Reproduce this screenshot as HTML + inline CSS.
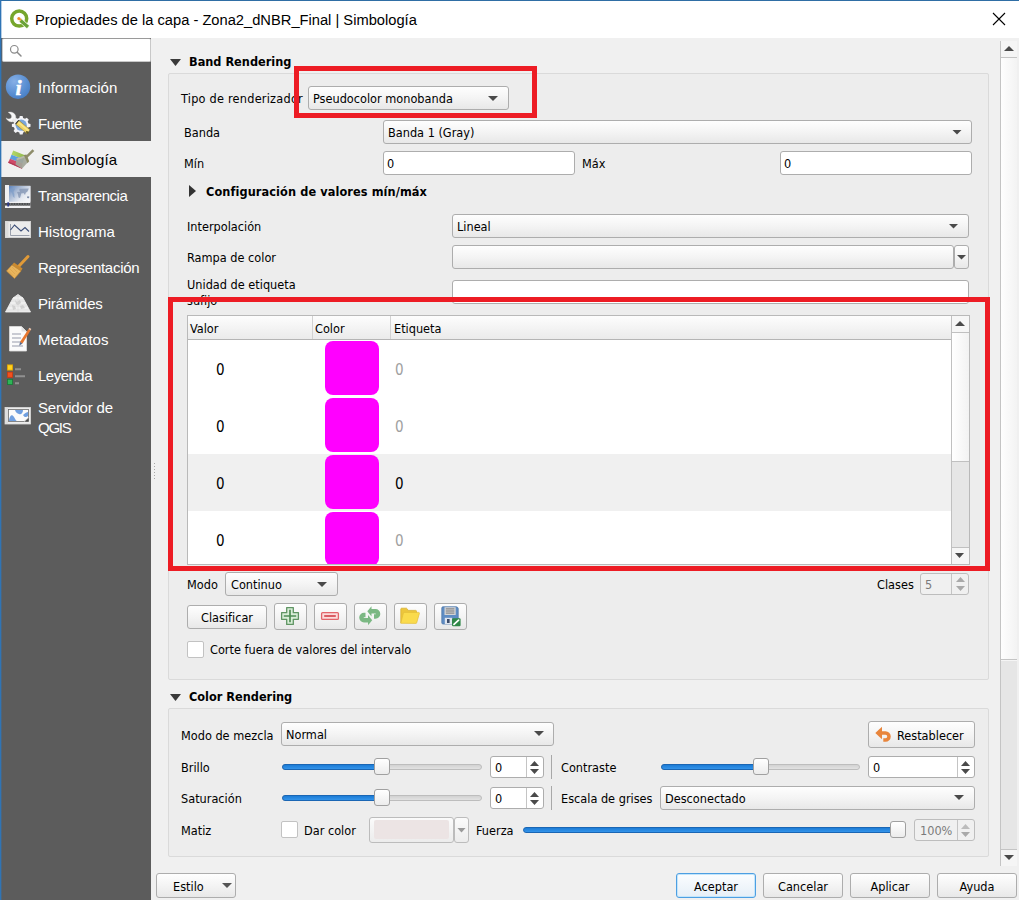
<!DOCTYPE html>
<html lang="es"><head><meta charset="utf-8"><title>Propiedades de la capa</title>
<style>
*{box-sizing:border-box;margin:0;padding:0}
html,body{width:1019px;height:900px;overflow:hidden;background:#f0f0f0}
body{position:relative;font-family:"DejaVu Sans Condensed","Liberation Sans",sans-serif;font-size:12.6px;color:#000}
.a{position:absolute}
.t{position:absolute;white-space:nowrap;line-height:16px;height:16px;font-size:12.6px}
.b{font-weight:bold}
.t{margin-top:1px}
.v{font-size:15px;line-height:18px;height:18px}
.g{color:#a0a0a0}
#title{left:0;top:0;width:1019px;height:38px;background:#fff;border-top:1px solid #2f6ea5}
#ttext{left:35px;top:10px;font-family:"Liberation Sans",sans-serif;font-size:14.7px;line-height:20px;white-space:nowrap}
#lb{left:0;top:0;width:2px;height:900px;background:linear-gradient(90deg,#2f74b5 0 1px,rgba(47,116,181,.35) 1px 2px)}
#side{left:1px;top:38px;width:150px;height:862px;background:#5c5c5c}
.si{position:absolute;left:38px;color:#fff;font-family:"Liberation Sans",sans-serif;font-size:15px;line-height:20px;white-space:nowrap}
.combo{position:absolute;border:1px solid #adadad;border-radius:3px;background:linear-gradient(#fefefe,#f4f4f4 50%,#e8e8e8)}
.inp{position:absolute;border:1px solid #adadad;border-radius:3px;background:#fff}
.btn{position:absolute;border:1px solid #adadad;border-radius:3px;background:linear-gradient(#fefefe,#f4f4f4 50%,#e8e8e8);text-align:center;line-height:24px;font-size:12.6px}
.grp{position:absolute;border:1px solid #dadada;background:#ededed;border-radius:2px}
.arr{position:absolute;width:10px;height:5px;background:#4a4a4a;clip-path:polygon(0 0,100% 0,50% 100%)}
.arrs{position:absolute;width:9px;height:5px;background:#4a4a4a;clip-path:polygon(0 0,100% 0,50% 100%)}
.arru{position:absolute;width:9px;height:5px;background:#4a4a4a;clip-path:polygon(50% 0,100% 100%,0 100%)}
.garr{position:absolute;width:11px;height:7px;background:#3a3a3a;clip-path:polygon(0 0,100% 0,50% 100%)}
.red{position:absolute;border:4px solid #ed1c24}
.sw{position:absolute;left:325px;width:54px;height:54px;background:#ff00ff;border-radius:8px}
.chk{position:absolute;width:17px;height:17px;background:#fff;border:1px solid #c2c2c2;border-radius:2px}
.trk{position:absolute;height:6px;border:1px solid #bdbdbd;border-radius:3px;background:linear-gradient(#d2d2d2,#e2e2e2)}
.trkf{position:absolute;height:6px;border:1px solid #1a66b4;border-radius:3px;background:linear-gradient(#1c7cd6,#3494ea)}
.hnd{position:absolute;width:16px;height:17px;border:1px solid #a0a0a0;border-radius:3px;background:linear-gradient(#ffffff,#ececec)}
</style></head><body>
<div class="a" id="title"></div>
<div class="a" id="ttext">Propiedades de la capa - Zona2_dNBR_Final | Simbología</div>
<svg class="a" style="left:9px;top:9px" width="22" height="20" viewBox="0 0 22 20"><circle cx="10.200" cy="9.600" r="7.500" fill="none" stroke="#76a62c" stroke-width="3.500"/><path d="M9.500 9.500L19.500 18.500" stroke="#f4f9e8" stroke-width="4.500"/><path d="M11.500 11.500L19 18" stroke="#6aa238" stroke-width="3.200" stroke-linecap="butt"/><path d="M9 8.800l3.800 1.300-1.700 2.100z" fill="#f0a030"/><circle cx="9.800" cy="9.600" r="1.500" fill="#ee8a2a"/></svg>
<svg class="a" style="left:992px;top:12px" width="14" height="14" viewBox="0 0 14 14"><path d="M1 1l12 12M13 1L1 13" stroke="#000" stroke-width="1.100"/></svg>
<!--SIDEBAR-->
<div class="a" id="side"></div>
<div class="a" style="left:2px;top:38px;width:149px;height:24px;background:#fff;border:1px solid #c8c8c8;border-top-color:#9a9a9a;border-radius:2px"></div>
<svg class="a" style="left:8px;top:43px" width="16" height="16" viewBox="0 0 16 16"><circle cx="6.3" cy="6.3" r="3.8" fill="none" stroke="#8a8a8a" stroke-width="1.2"/><path d="M9.2 9.2L13 13" stroke="#8a8a8a" stroke-width="1.5" stroke-linecap="round"/></svg>
<div class="a" style="left:1px;top:141px;width:150px;height:36px;background:#f0f0f0"></div>
<!-- info icon -->
<svg class="a" style="left:5px;top:74px" width="26" height="26" viewBox="0 0 26 26"><defs><radialGradient id="gi" cx="0.35" cy="0.28" r="0.85"><stop offset="0" stop-color="#86b0e6"/><stop offset="0.6" stop-color="#5a8fd2"/><stop offset="1" stop-color="#4379c0"/></radialGradient></defs><circle cx="13" cy="12.700" r="12.200" fill="url(#gi)"/><text x="13.600" y="20.500" font-family="Liberation Serif,serif" font-style="italic" font-weight="bold" font-size="22" fill="#fff" stroke="#fff" stroke-width=".5" text-anchor="middle">i</text></svg>
<!-- fuente icon -->
<svg class="a" style="left:5px;top:111px" width="26" height="26" viewBox="0 0 26 26"><g transform="translate(16.200,14.200)"><path d="M-1.400-9.200h2.800l.5 2 1.900.8 1.800-1.100 2 2-1.100 1.800.8 1.900 2 .5v2.800l-2 .5-.8 1.900 1.100 1.800-2 2-1.800-1.100-1.900.8-.5 2h-2.800l-.5-2-1.900-.8-1.800 1.100-2-2 1.100-1.800-.8-1.900-2-.5v-2.800l2-.5.8-1.900-1.100-1.800 2-2 1.800 1.100 1.900-.8z" fill="#f3f3f7"/><circle r="5.600" fill="#7aa6dc"/></g><path d="M3.200 1.300c3.300-.9 6.300.6 7.300 3.300.6 1.700.3 3.100-.3 4.200l-2.600 2c-1.500.3-3.500 0-5.200-1.700-.7-.7-1.100-1.500-1.300-2.200 1.700 1.300 3.700 1.300 4.800.3 1.200-1.200 1.200-3.500-2.700-5.900z" fill="#f7f7f7" stroke="#d8d8d8" stroke-width=".4"/><path d="M8.500 7.300l3.900 3.400-2 2.300-3.700-3.500z" fill="#ececec"/><path d="M10.700 13.200l3.200-3.800" stroke="#1e1e1e" stroke-width="1.400"/><path d="M14.100 9.600L25 18.700 21.800 22.500 10.900 13.400z" fill="#f0d465" stroke="#7d6f2c" stroke-width=".5"/><path d="M13.300 11.300L23.600 19.900" stroke="#f9e68a" stroke-width="1.600"/><ellipse cx="22.300" cy="21.300" rx="1.500" ry="1.100" transform="rotate(40 22.300 21.300)" fill="#5a5326"/></svg>
<!-- simbologia icon -->
<svg class="a" style="left:7px;top:147px" width="28" height="26" viewBox="0 0 28 26"><defs><linearGradient id="gs1" x1="0" x2="1"><stop offset="0" stop-color="#b5d96a"/><stop offset="1" stop-color="#8fb64c"/></linearGradient></defs><path d="M6.200 3.600L18.600 8.600 17 12.600 4.500 7.700z" fill="url(#gs1)"/><path d="M4.500 7.700L17 12.600 15.500 16.600 2.900 11.700z" fill="#5d9fe0"/><path d="M2.900 11.700L15.500 16.600 15 21.800 1.200 15.800z" fill="#cf4a68"/><path d="M1.200 15.800L15 21.800 14.600 20.300 1.700 14.600z" fill="#b23a55"/><path d="M9.500 11.500L17.500 8.800 21 15 15 21.800 8.500 17.500z" fill="#a3a79a" opacity=".93"/><path d="M9.500 11.500L17.500 8.800 18.300 10.200 10.200 13z" fill="#b9bcae"/><path d="M16.800 8L19.500 7.500 22.200 14.200 20.500 16.200z" fill="#8b8a64"/><path d="M18.500 9.200L25.500 2.200 27.300 4 20.200 11z" fill="#8e8c6a"/></svg>
<!-- transparencia icon -->
<svg class="a" style="left:4px;top:184px" width="28" height="26" viewBox="0 0 28 26"><defs><linearGradient id="gt" x1="0" x2="1" y1="0" y2=".75"><stop offset="0" stop-color="#5c84be"/><stop offset=".35" stop-color="#a4b6d2"/><stop offset=".75" stop-color="#e6eaf1"/><stop offset="1" stop-color="#f4f5f8"/></linearGradient></defs><rect x="1" y="1.800" width="25.400" height="22.200" fill="#f1f1f3"/><rect x="5" y="2" width="21.400" height="15.800" fill="url(#gt)"/><rect x="1" y="1" width="4" height="16.500" fill="#f0f0f2"/><path d="M6.500 4.500l4.500.3-1.500 3.200.8 2 .2 4-1.500-1.500-1-3.500-1.800-2z" fill="#7d9cc8" opacity=".7"/><path d="M13 8l3.500-.5.800 2-1.300 4.500-1.500-.5-.5-3zM15.500 4.800l9.300-.2-1.300 3-1.700 1.200-.8 2.200-1.500-2-1.800.5-1.500-1.500-1-1.700z" fill="#8496b4" opacity=".8"/><path d="M23.300 12.200l2 .3-.3 1.700-2-.3z" fill="#7e8eaa"/><rect x="1" y="19" width="25.400" height="2.600" fill="#4e4e50"/><path d="M6 20.300h20" stroke="#6f7375" stroke-width="2.600" stroke-dasharray="1.200 1.400"/><rect x="3.300" y="18.300" width="1.800" height="4.200" fill="#2d3a8c"/></svg>
<!--SIDE2-->
<!-- histograma icon -->
<svg class="a" style="left:4px;top:220px" width="28" height="20" viewBox="0 0 28 20"><rect x="1.500" y="1.500" width="25" height="16" fill="#ececec" stroke="#d2d2d2"/><rect x="1.500" y="1.500" width="3" height="16" fill="#dcdcdc"/><path d="M6.500 4v11.500h19" fill="none" stroke="#9aa0ac" stroke-width="1"/><path d="M6.500 10l4-5 6.500 6 4-3.500 4 4" fill="none" stroke="#3d4f78" stroke-width="1.100"/></svg>
<!-- representacion icon (brush) -->
<svg class="a" style="left:5px;top:253px" width="26" height="28" viewBox="0 0 26 28"><path d="M14 13L23 3.500" stroke="#e09a38" stroke-width="3" stroke-linecap="round"/><path d="M9 9.500l8.500 6-1.500 2.500-9-6z" fill="#c98a30"/><path d="M7 12l9 6-6.500 7.500-8-7.500z" fill="#e8b45c" stroke="#c98a30" stroke-width=".6"/><path d="M5 16l5 5M7 14l5 5M3.500 18l5 5" stroke="#d9a048" stroke-width=".6"/></svg>
<!-- piramides icon -->
<svg class="a" style="left:4px;top:292px" width="28" height="22" viewBox="0 0 28 22"><path d="M1.500 20L9 6l5-3.500L19 6l7.500 14z" fill="#e6e6e6" stroke="#f2f2f2" stroke-width=".8"/><path d="M9 6h10M6.500 11h15M4 16h20" stroke="#fafafa" stroke-width=".9"/><path d="M11 8l2 2 3-2 1 3-3 2-2-1zM8 13l3 1 1 3-3 1zM16 14l3-1 2 3-4 1z" fill="#c9c9c9" opacity=".8"/><path d="M14 2.500V20" stroke="#d6d6d6" stroke-width=".5"/></svg>
<!-- metadatos icon -->
<svg class="a" style="left:6px;top:325px" width="26" height="28" viewBox="0 0 26 28"><path d="M3.500 1.500h12l5 5v19.500h-17z" fill="#fbfbfb" stroke="#dedede" stroke-width=".8"/><path d="M15.500 1.500v5h5z" fill="#e2e2e2"/><path d="M6 9h9M6 13h9M6 17h10M6 21h11" stroke="#b9bcc6" stroke-width="1.300"/><path d="M22.500 4l2 1.500-8 13-2.500-1.500z" fill="#e8772e"/><path d="M14 17l2.500 1.500-3.300 2.200z" fill="#5a6a8a"/><path d="M22.500 4l2 1.500 .8-1.600-1.800-1.200z" fill="#f3c9b0"/></svg>
<!-- leyenda icon -->
<svg class="a" style="left:5px;top:362px" width="24" height="26" viewBox="0 0 24 26"><rect x="2.400" y="2.900" width="5.200" height="5.200" fill="#ffd21f" stroke="#e3a400" stroke-width=".8"/><rect x="2.400" y="10.100" width="5.200" height="5.200" fill="#f3501e" stroke="#c93a10" stroke-width=".8"/><rect x="2.400" y="17.300" width="5.200" height="5.200" fill="#2fb457" stroke="#167a36" stroke-width=".8"/><path d="M10 7.300h6M10 14.300h10M10 21.300h4" stroke="#909090" stroke-width="2"/></svg>
<!-- servidor icon -->
<svg class="a" style="left:4px;top:406px" width="28" height="20" viewBox="0 0 28 20"><rect x="1" y="1.500" width="25.500" height="16.500" fill="#ececec" stroke="#dadada" stroke-width=".8"/><rect x="1" y="1.500" width="3" height="16.500" fill="#dedede"/><rect x="4.500" y="3.500" width="20" height="12" fill="#fbfbfb" stroke="#6b6b6b" stroke-width=".8"/><path d="M5 14c1-5 3-6 5-3s2 4 3 4H5zM11 4h8c0 3-2 5-4 4s-3-1-4-4zM19 9c2-2 4-3 5-3v4c-2 2-4 1-5-1z" fill="#6f9fe0"/><path d="M24.500 11.500v4h-4.500z" fill="#4a4a4a"/><path d="M20 15.500c1.500-.5 3-2 4.500-4" fill="none" stroke="#e8e8e8" stroke-width=".7"/></svg>
<!--/SIDE2-->
<div class="si" style="top:78px;letter-spacing:0.1px">Información</div>
<div class="si" style="top:114px;letter-spacing:-0.53px">Fuente</div>
<div class="si" style="top:150px;left:41px;color:#000;letter-spacing:0.13px">Simbología</div>
<div class="si" style="top:186px;letter-spacing:-0.46px">Transparencia</div>
<div class="si" style="top:222px;letter-spacing:0.03px">Histograma</div>
<div class="si" style="top:258px;letter-spacing:-0.26px">Representación</div>
<div class="si" style="top:294px;letter-spacing:-0.24px">Pirámides</div>
<div class="si" style="top:330px;letter-spacing:0.06px">Metadatos</div>
<div class="si" style="top:366px;letter-spacing:-0.51px">Leyenda</div>
<div class="si" style="top:398px;letter-spacing:-0.16px">Servidor de</div>
<div class="si" style="top:418px;letter-spacing:-1.25px">QGIS</div>
<!--/SIDEBAR-->
<!--C1-->
<!-- main scrollbar -->
<div class="a" style="left:1000px;top:41px;width:17px;height:825px;background:#f5f5f5;border-left:1px solid #c4c4c4"></div>
<div class="a" style="left:1001px;top:57px;width:16px;height:603px;background:linear-gradient(90deg,#fefefe,#f3f3f3);border-top:1px solid #c4c4c4;border-bottom:1px solid #c4c4c4"></div>
<div class="a" style="left:1001px;top:661px;width:16px;height:188px;background:#e6e6e6"></div>
<div class="a" style="left:1001px;top:849px;width:16px;height:17px;background:#f5f5f5;border-top:1px solid #c4c4c4"></div>
<div class="arru" style="left:1004px;top:46px;width:10px;height:5px"></div>
<div class="arr" style="left:1004px;top:855px"></div>
<!-- splitter dots -->
<div class="a" style="left:154px;top:463px;width:1px;height:17px;background:repeating-linear-gradient(#a8a8a8 0 1px,transparent 1px 3px)"></div>
<!-- Band Rendering group -->
<div class="grp" style="left:168px;top:73px;width:821px;height:607px"></div>
<div class="garr" style="left:170px;top:59px"></div>
<div class="t b" style="left:189px;top:53px">Band Rendering</div>
<div class="t" style="left:181px;top:90px;letter-spacing:0.23px">Tipo de renderizador</div>
<div class="combo" style="left:308px;top:86px;width:201px;height:24px"></div>
<div class="t" style="left:313px;top:90px">Pseudocolor monobanda</div>
<div class="arr" style="left:488px;top:96px"></div>
<div class="red" style="left:294px;top:66px;width:243px;height:52px;border-width:5px"></div>
<div class="t" style="left:184px;top:124px">Banda</div>
<div class="combo" style="left:383px;top:120px;width:589px;height:24px"></div>
<div class="t" style="left:388px;top:124px">Banda 1 (Gray)</div>
<div class="arr" style="left:952px;top:129.500px"></div>
<div class="t" style="left:184px;top:155px">Mín</div>
<div class="inp" style="left:383px;top:151px;width:192px;height:24px"></div>
<div class="t" style="left:387px;top:155px">0</div>
<div class="t" style="left:582px;top:155px">Máx</div>
<div class="inp" style="left:780px;top:151px;width:192px;height:24px"></div>
<div class="t" style="left:784px;top:155px">0</div>
<div class="a" style="left:189px;top:185px;width:0;height:0;border-top:6px solid transparent;border-bottom:6px solid transparent;border-left:7px solid #333"></div>
<div class="t b" style="left:206px;top:183px;letter-spacing:.1px">Configuración de valores mín/máx</div>
<div class="t" style="left:187px;top:218px">Interpolación</div>
<div class="combo" style="left:452px;top:214px;width:517px;height:24px"></div>
<div class="t" style="left:457px;top:218px">Lineal</div>
<div class="arr" style="left:948.500px;top:223.500px"></div>
<div class="t" style="left:187px;top:249px">Rampa de color</div>
<div class="combo" style="left:452px;top:245px;width:502px;height:24px"></div>
<div class="combo" style="left:954px;top:245px;width:15px;height:24px"></div>
<div class="arr" style="left:956.500px;top:254.500px"></div>
<div class="t" style="left:187px;top:276px">Unidad de etiqueta</div>
<div class="t" style="left:187px;top:292px">sufijo</div>
<div class="inp" style="left:452px;top:280px;width:517px;height:24px"></div>
<!--/C1-->
<!--C2-->
<!-- table -->
<div class="a" style="left:187px;top:315px;width:783px;height:250px;background:#fff;border:1px solid #b9b9b9"></div>
<div class="a" style="left:188px;top:454px;width:764px;height:57px;background:#f0f0f0"></div>
<div class="a" style="left:188px;top:316px;width:764px;height:24px;background:linear-gradient(#fdfdfd,#f3f3f3 55%,#ebebeb);border-bottom:1px solid #b5b5b5"></div>
<div class="a" style="left:312px;top:316px;width:1px;height:23px;background:#d2d2d2"></div>
<div class="a" style="left:390px;top:316px;width:1px;height:23px;background:#d2d2d2"></div>
<div class="t" style="left:190px;top:320px">Valor</div>
<div class="t" style="left:315px;top:320px">Color</div>
<div class="t" style="left:394px;top:320px">Etiqueta</div>
<div class="sw" style="top:341px"></div>
<div class="sw" style="top:398px"></div>
<div class="sw" style="top:455px"></div>
<div class="a" style="left:325px;top:512px;width:54px;height:52px;overflow:hidden"><div class="sw" style="left:0;top:0"></div></div>
<div class="t v" style="left:216px;top:360px">0</div>
<div class="t v" style="left:216px;top:417px">0</div>
<div class="t v" style="left:216px;top:474px">0</div>
<div class="t v" style="left:216px;top:531px">0</div>
<div class="t v g" style="left:395px;top:360px">0</div>
<div class="t v g" style="left:395px;top:417px">0</div>
<div class="t v" style="left:395px;top:474px">0</div>
<div class="t v g" style="left:395px;top:531px">0</div>
<!-- table scrollbar -->
<div class="a" style="left:951px;top:316px;width:18px;height:248px;background:#f6f6f6;border-left:1px solid #c0c0c0"></div>
<div class="a" style="left:952px;top:332px;width:17px;height:130px;background:linear-gradient(90deg,#ffffff,#f2f2f2);border-top:1px solid #c0c0c0;border-bottom:1px solid #c0c0c0"></div>
<div class="a" style="left:952px;top:462px;width:17px;height:86px;background:#e6e6e6;border-bottom:1px solid #c0c0c0"></div>
<div class="arru" style="left:955px;top:321px;width:10px"></div>
<div class="arr" style="left:955px;top:553px;width:9px"></div>
<div class="red" style="left:168px;top:297px;width:822px;height:274px;border-width:5px"></div>
<!-- mode row -->
<div class="t" style="left:187px;top:576px">Modo</div>
<div class="combo" style="left:225px;top:572px;width:113px;height:24px"></div>
<div class="t" style="left:231px;top:576px">Continuo</div>
<div class="arr" style="left:317px;top:582px"></div>
<div class="t" style="left:877px;top:576px">Clases</div>
<div class="inp" style="left:920px;top:573px;width:49px;height:22px;background:#f0f0f0;border-color:#bdbdbd;border-radius:3px"></div>
<div class="a" style="left:951px;top:574px;width:1px;height:20px;background:#c4c4c4"></div>
<div class="t" style="left:925px;top:576px;color:#7a7a7a">5</div>
<div class="arru" style="left:956px;top:577px;background:#a9a9a9"></div>
<div class="arrs" style="left:956px;top:586px;background:#a9a9a9"></div>
<!-- buttons row -->
<div class="btn" style="left:187px;top:605px;width:80px;height:24px;line-height:23px">Clasificar</div>
<div class="btn" style="left:274px;top:603px;width:33px;height:27px"></div>
<div class="btn" style="left:314px;top:603px;width:33px;height:27px"></div>
<div class="btn" style="left:354px;top:603px;width:33px;height:27px"></div>
<div class="btn" style="left:394px;top:603px;width:33px;height:27px"></div>
<div class="btn" style="left:434px;top:603px;width:33px;height:27px"></div>
<!--ICONS-->
<svg class="a" style="left:280px;top:606px" width="20" height="20" viewBox="0 0 20 20"><path d="M6.700 1.600h6.600v5.100h5.100v6.600h-5.100v5.100H6.700v-5.100H1.600V6.700h5.100z" fill="#d9eed8" stroke="#5f9463" stroke-width="1.300" stroke-linejoin="round"/><path d="M10 3.800v12.400M3.800 10h12.400" stroke="#4f8d55" stroke-width="1.700"/></svg>
<svg class="a" style="left:320px;top:611px" width="20" height="10" viewBox="0 0 20 10"><rect x="1.600" y="1.600" width="16.800" height="6.800" rx="1" fill="#fbdcdc" stroke="#e2656b" stroke-width="1.300"/><path d="M4.200 5h11.600" stroke="#d8565d" stroke-width="1.900"/></svg>
<svg class="a" style="left:359px;top:605px" width="22" height="22" viewBox="0 0 22 22"><g><path d="M8.300 6.300L12.500 1.300v10.200z" fill="#7bb883"/><path d="M12 6.300H16.500a2.600 2.600 0 0 1 0 5.200H15" fill="none" stroke="#7bb883" stroke-width="4.400"/></g><g transform="rotate(180 10.750 10.750)"><path d="M8.300 6.300L12.500 1.300v10.200z" fill="#7bb883"/><path d="M12 6.300H16.500a2.600 2.600 0 0 1 0 5.200H15" fill="none" stroke="#7bb883" stroke-width="4.400"/></g></svg>
<svg class="a" style="left:399px;top:606px" width="22" height="20" viewBox="0 0 22 20"><path d="M1.800 17V3c0-.5.400-.8.800-.8h4.600c.4 0 .7.200.9.500l1 1.700h7.600c.5 0 .8.400.8.800v3" fill="#ecc63c" stroke="#d9b233" stroke-width=".8" stroke-linejoin="round"/><path d="M1.800 17.300L4.400 7c.1-.4.400-.6.800-.6h14.500c.5 0 .9.500.7 1l-2.700 9.400c-.1.400-.4.600-.8.600z" fill="#fadb4c" stroke="#e3bd3a" stroke-width=".7" stroke-linejoin="round"/></svg>
<svg class="a" style="left:440px;top:605px" width="22" height="22" viewBox="0 0 22 22"><path d="M3 1.800h13.200c1.100 0 2 .9 2 2v14c0 .7-.5 1.200-1.200 1.200H3c-.7 0-1.200-.5-1.200-1.200V3c0-.7.500-1.200 1.200-1.200z" fill="#5f8dc4" stroke="#4f78aa" stroke-width=".8"/><rect x="4.500" y="2.200" width="11.200" height="7.800" fill="#d4d4d4"/><path d="M5.800 3.900h8.600M5.800 6h8.600M5.800 8.100h8.600" stroke="#77797c" stroke-width="1"/><rect x="4.800" y="12.800" width="7.400" height="6.200" fill="#dfe5ee"/><rect x="7" y="14" width="2.600" height="4" fill="#3a4b6a"/><rect x="12" y="13.200" width="8.600" height="8" rx="1.200" fill="#2f8748"/><path d="M14 19.300l4.600-4.200" stroke="#fff" stroke-width="1.800" stroke-linecap="round"/></svg>
<!--/ICONS-->
<div class="chk" style="left:187px;top:641px"></div>
<div class="t" style="left:210px;top:641px">Corte fuera de valores del intervalo</div>
<!--/C2-->
<!--C3-->
<!-- Color Rendering group -->
<div class="grp" style="left:168px;top:708px;width:821px;height:149px"></div>
<div class="garr" style="left:170px;top:694px"></div>
<div class="t b" style="left:189px;top:688px">Color Rendering</div>
<div class="t" style="left:181px;top:727px">Modo de mezcla</div>
<div class="combo" style="left:281px;top:722px;width:273px;height:24px"></div>
<div class="t" style="left:286px;top:726px">Normal</div>
<div class="arr" style="left:534px;top:731px"></div>
<div class="btn" style="left:868px;top:721px;width:107px;height:27px"></div>
<svg class="a" style="left:874px;top:726px" width="18" height="18" viewBox="0 0 18 18"><path d="M1.300 7L8 .8v12.400z" fill="#e8853c"/><path d="M7.500 7H11.500a3.500 3.500 0 0 1 0 7H9.300" fill="none" stroke="#e8853c" stroke-width="3.500"/></svg>
<div class="t" style="left:897px;top:727px">Restablecer</div>
<!-- Brillo -->
<div class="t" style="left:181px;top:759px">Brillo</div>
<div class="trk" style="left:282px;top:764px;width:200px"></div>
<div class="trkf" style="left:282px;top:764px;width:98px"></div>
<div class="hnd" style="left:374px;top:758px"></div>
<div class="inp" style="left:490px;top:756px;width:54px;height:22px"></div>
<div class="a" style="left:526px;top:757px;width:1px;height:20px;background:#c4c4c4"></div>
<div class="t" style="left:495px;top:759px">0</div>
<div class="arru" style="left:530px;top:761px"></div>
<div class="arrs" style="left:530px;top:769px"></div>
<div class="a" style="left:551px;top:755px;width:1px;height:24px;background:#a8a8a8"></div>
<div class="t" style="left:561px;top:759px">Contraste</div>
<div class="trk" style="left:661px;top:764px;width:199px"></div>
<div class="trkf" style="left:661px;top:764px;width:98px"></div>
<div class="hnd" style="left:753px;top:758px"></div>
<div class="inp" style="left:868px;top:756px;width:107px;height:22px"></div>
<div class="a" style="left:957px;top:757px;width:1px;height:20px;background:#c4c4c4"></div>
<div class="t" style="left:873px;top:759px">0</div>
<div class="arru" style="left:961px;top:761px"></div>
<div class="arrs" style="left:961px;top:769px"></div>
<!-- Saturacion -->
<div class="t" style="left:181px;top:790px">Saturación</div>
<div class="trk" style="left:282px;top:795px;width:200px"></div>
<div class="trkf" style="left:282px;top:795px;width:98px"></div>
<div class="hnd" style="left:374px;top:789px"></div>
<div class="inp" style="left:490px;top:787px;width:54px;height:22px"></div>
<div class="a" style="left:526px;top:788px;width:1px;height:20px;background:#c4c4c4"></div>
<div class="t" style="left:495px;top:790px">0</div>
<div class="arru" style="left:530px;top:792px"></div>
<div class="arrs" style="left:530px;top:800px"></div>
<div class="a" style="left:551px;top:786px;width:1px;height:24px;background:#a8a8a8"></div>
<div class="t" style="left:561px;top:790px">Escala de grises</div>
<div class="combo" style="left:660px;top:786px;width:315px;height:24px"></div>
<div class="t" style="left:665px;top:790px">Desconectado</div>
<div class="arr" style="left:954px;top:795px"></div>
<!-- Matiz -->
<div class="t" style="left:181px;top:822px">Matiz</div>
<div class="chk" style="left:281px;top:821px"></div>
<div class="t" style="left:304px;top:822px">Dar color</div>
<div class="combo" style="left:369px;top:817px;width:85px;height:26px;background:linear-gradient(#fbfbfb,#ececec);border-color:#bcbcbc"></div>
<div class="a" style="left:374px;top:820px;width:75px;height:19px;background:#ece4e4;border-radius:2px"></div>
<div class="combo" style="left:454px;top:817px;width:15px;height:26px;background:linear-gradient(#fbfbfb,#ececec);border-color:#bcbcbc"></div>
<div class="arr" style="left:457px;top:827.500px;width:9px;background:#9a9a9a"></div>
<div class="t" style="left:476px;top:822px">Fuerza</div>
<div class="trkf" style="left:523px;top:827px;width:375px"></div>
<div class="hnd" style="left:890px;top:821px;height:17px"></div>
<div class="inp" style="left:914px;top:819px;width:61px;height:22px;background:#f0f0f0;border-color:#bdbdbd;border-radius:3px"></div>
<div class="a" style="left:957px;top:820px;width:1px;height:20px;background:#c4c4c4"></div>
<div class="t" style="left:920px;top:822px;color:#7a7a7a">100%</div>
<div class="arru" style="left:961px;top:824px;background:#bcbcbc"></div>
<div class="arrs" style="left:961px;top:832px;background:#a9a9a9"></div>
<!-- bottom buttons -->
<div class="btn" style="left:156px;top:873px;width:80px;height:25px"></div>
<div class="t" style="left:173px;top:878px">Estilo</div>
<div class="arr" style="left:222px;top:883px;background:#555"></div>
<div class="btn" style="left:676px;top:873px;width:80px;height:25px;line-height:25px;border-color:#4d9fe2;box-shadow:inset 0 0 0 1px #c3e5fb;background:linear-gradient(#fbfdff,#e6eff7)">Aceptar</div>
<div class="btn" style="left:763px;top:873px;width:80px;height:25px;line-height:25px">Cancelar</div>
<div class="btn" style="left:850px;top:873px;width:80px;height:25px;line-height:25px">Aplicar</div>
<div class="btn" style="left:937px;top:873px;width:80px;height:25px;line-height:25px">Ayuda</div>
<!--/C3-->
<div class="a" id="lb"></div>
</body></html>
